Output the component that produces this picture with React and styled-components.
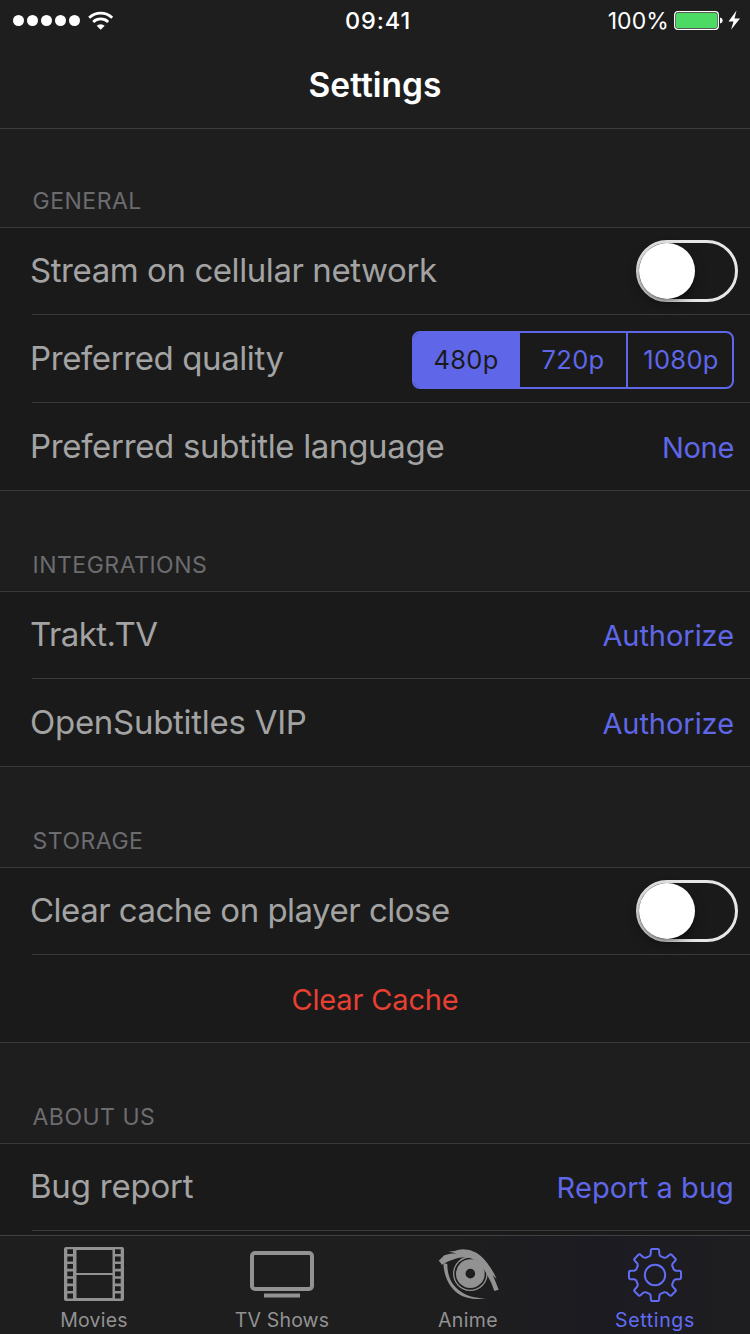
import React from "react";
import styled, { createGlobalStyle } from "styled-components";

const GlobalStyle = createGlobalStyle`
  * { box-sizing: border-box; }
  html, body { margin: 0; background: #1e1e1e; }
  body { font-family: Inter, "Liberation Sans", sans-serif; overflow: hidden; }
`;

const Screen = styled.main`
  width: 750px;
  height: 1334px;
  display: flex;
  flex-direction: column;
  overflow: hidden;
  background: #1e1e1e;
  color: #fff;
`;

const StatusBar = styled.div`
  height: 40px;
  flex: none;
  display: grid;
  grid-template-columns: 1fr auto 1fr;
  align-items: center;
  padding: 1px 9px 0 13px;
`;

const Signal = styled.div`
  display: flex;
  align-items: center;
  gap: 3px;
`;

const Dot = styled.i`
  width: 11px;
  height: 11px;
  border-radius: 50%;
  background: #fff;
`;

const WifiIcon = styled.svg`
  margin-left: 5px;
`;

const Clock = styled.div`
  font-size: 23.5px;
  font-weight: 550;
  line-height: 28px;
  letter-spacing: 0.9px;
  margin: 0 -2px 0 0;
`;

const Power = styled.div`
  display: flex;
  justify-content: flex-end;
  align-items: center;
`;

const Percent = styled.span`
  font-size: 23px;
  line-height: 28px;
  letter-spacing: 0.1px;
  margin-right: 5px;
`;

const NavBar = styled.header`
  height: 89px;
  flex: none;
  display: flex;
  justify-content: center;
  border-bottom: 1px solid #3d3d3d;
  padding-top: 22px;
`;

const Title = styled.h1`
  margin: 0;
  font-size: 33.5px;
  font-weight: 600;
  line-height: 46px;
`;

const Content = styled.div`
  flex: 1;
  min-height: 0;
  overflow: hidden;
`;

const SectionTitle = styled.h2`
  margin: 0;
  height: ${(p) => p.$height}px;
  display: flex;
  align-items: flex-end;
  padding: 0 0 11px 32.5px;
  font-size: 23px;
  font-weight: 400;
  line-height: 30px;
  letter-spacing: 0.5px;
  color: #6c6c70;
`;

const Group = styled.div`
  background: #1a1a1a;
  border-top: 1px solid #3a3a3a;
  border-bottom: 1px solid #3a3a3a;
`;

const Row = styled.div`
  height: 88px;
  margin-left: 32px;
  display: flex;
  align-items: center;
  justify-content: ${(p) => (p.$center ? "center" : "space-between")};
  padding-right: ${(p) => p.$inset ?? 16}px;
  border-bottom: 1px solid #3a3a3a;
  &:first-child { height: 87px; }
  &:last-child:not(:first-child) { height: 87px; border-bottom: 0; }
`;

const Label = styled.span`
  margin-left: -2px;
  padding-bottom: 2px;
  font-size: 33px;
  line-height: 40px;
  letter-spacing: ${(p) => p.$spacing ?? 0}px;
  color: #a3a3a3;
  white-space: nowrap;
`;

const Action = styled.button`
  border: 0;
  padding: 2px 0 0;
  background: none;
  font: 400 29px/36px Inter, "Liberation Sans", sans-serif;
  letter-spacing: ${(p) => p.$spacing ?? 0}px;
  color: ${(p) => (p.$danger ? "#e74033" : "#5f67e8")};
  white-space: nowrap;
`;

const Switch = styled.div`
  width: 102px;
  height: 62px;
  display: flex;
  align-items: center;
  border: 3px solid #e7e5e6;
  border-radius: 31px;
`;

const Knob = styled.div`
  width: 56px;
  height: 56px;
  border-radius: 50%;
  background: #fff;
  box-shadow: 0 5px 12px rgba(0, 0, 0, 0.35), 0 2px 3px rgba(0, 0, 0, 0.2);
`;

const Segmented = styled.div`
  width: 322px;
  height: 58px;
  display: grid;
  grid-template-columns: repeat(3, 106px);
  overflow: hidden;
  border: 2px solid #5f67e8;
  border-radius: 8px;
  margin-top: 2px;
`;

const Segment = styled.div`
  display: flex;
  align-items: center;
  justify-content: center;
  font-size: 25.5px;
  line-height: 30px;
  letter-spacing: 0.3px;
  background: ${(p) => (p.$selected ? "#5f67e8" : "transparent")};
  color: ${(p) => (p.$selected ? "#1a1a1a" : "#5f67e8")};
  box-shadow: ${(p) => (p.$selected ? "-2px 0 0 #5f67e8" : "none")};
  & + & + & { border-left: 2px solid #5f67e8; padding-left: 2px; }
  &:first-child { padding-right: 2px; }
`;

const TabBar = styled.nav`
  height: 99px;
  flex: none;
  display: grid;
  grid-template-columns: 188px 188px 184px 190px;
  border-top: 1px solid #414141;
  background: linear-gradient(90deg, #1e1e1e 0 60%, #1c1b22 80%, #1e1e20);
`;

const Tab = styled.div`
  display: flex;
  flex-direction: column;
  align-items: center;
  padding-top: 8px;
  color: ${(p) => (p.$active ? "#626df5" : "#929292")};
`;

const TabLabel = styled.span`
  font-size: 19.5px;
  line-height: 24px;
  margin-top: 4px;
  letter-spacing: ${(p) => p.$spacing ?? 0.1}px;
`;

const FilmIcon = () => {
  const holes = [0, 1, 2, 3, 4, 5, 6];
  return (
    <svg width="64" height="60" viewBox="0 0 64 60" fill="none">
      <path
        fill="currentColor"
        fillRule="evenodd"
        d={
          "M4 3h56a2 2 0 0 1 2 2v50a2 2 0 0 1-2 2H4a2 2 0 0 1-2-2V5a2 2 0 0 1 2-2ZM14.5 6H50.5V29H14.5ZM14.5 31H50.5V54H14.5Z" +
          holes.map((i) => `M5.3 ${5.2 + i * 7.4}h5.700v4.800h-5.700ZM53 ${5.2 + i * 7.4}h5.700v4.800h-5.700Z`).join("")
        }
      />
    </svg>
  );
};

const TvIcon = () => (
  <svg width="64" height="60" viewBox="0 0 64 60" fill="none">
    <rect x="2" y="9" width="60" height="36" rx="3" stroke="currentColor" strokeWidth="4" />
    <path d="M14 51.5h36" stroke="currentColor" strokeWidth="4" />
  </svg>
);

const EyeIcon = () => (
  <svg width="64" height="60" viewBox="4 6 192 180" fill="currentColor">
    <path d="M12 56L29 40Q45 34 66 34Q52 33 40 28Q58 29 72 23Q100 19 125 32Q150 48 168 78Q178 92 186 111Q180 106 174 100Q180 112 192 143L179 147Q172 124 158 100C146 78 132 58 106 48C80 41 50 54 21 68Q18 61 12 56Z" />
    <path d="M26 63C27 96 40 134 72 156C92 169 124 174 154 169C118 168 96 162 76 147C50 128 38 102 38 66Z" />
    <circle cx="107" cy="95" r="50" fill="none" stroke="currentColor" strokeWidth="4" />
    <path fillRule="evenodd" d="M107 52a43 43 0 1 0 0 86a43 43 0 0 0 0-86ZM107 80.500a14.500 14.500 0 1 1 0 29a14.500 14.500 0 0 1 0-29Z" />
  </svg>
);

const tooth = (angle) => {
  const rad = (deg) => ((angle + deg) * Math.PI) / 180;
  const at = (r, deg) => `${(32 + r * Math.cos(rad(deg))).toFixed(2)} ${(31 + r * Math.sin(rad(deg))).toFixed(2)}`;
  return `${at(19.6, -16)}L${at(21, -12)}L${at(25, -9.5)}Q${at(26.2, -9)} ${at(26.2, -6.5)}L${at(26.2, 6.5)}Q${at(26.2, 9)} ${at(25, 9.5)}L${at(21, 12)}L${at(19.6, 16)}`;
};

const GearIcon = () => (
  <svg width="64" height="60" viewBox="0 0 64 60" fill="none" stroke="currentColor" strokeWidth="2" strokeLinejoin="round">
    <path d={`M${[0, 45, 90, 135, 180, 225, 270, 315].map(tooth).join("L")}Z`} />
    <circle cx="32" cy="31" r="10.2" />
  </svg>
);

const Toggle = () => (
  <Switch role="switch" aria-checked="false">
    <Knob />
  </Switch>
);

export default function App() {
  return (
    <Screen>
      <GlobalStyle />
      <StatusBar>
        <Signal>
          {[1, 2, 3, 4, 5].map((n) => (
            <Dot key={n} />
          ))}
          <WifiIcon width="26" height="20" viewBox="0 0 26 20" fill="none" stroke="#fff" strokeWidth="2.8">
            <path d="M1.200 6.700A16.500 16.500 0 0 1 24.200 6.700" />
            <path d="M5.200 10.900A11 11 0 0 1 20.200 10.900" />
            <path d="M12.700 18.800L8.700 14.800A5.800 5.800 0 0 1 16.700 14.800Z" fill="#fff" stroke="none" />
          </WifiIcon>
        </Signal>
        <Clock>09:41</Clock>
        <Power>
          <Percent>100%</Percent>
          <svg width="67" height="22" viewBox="0 0 67 22" fill="#fff">
            <rect x="0.7" y="1.7" width="43.6" height="17.6" rx="3" fill="none" stroke="#fff" strokeWidth="1.3" />
            <rect x="2" y="3" width="41" height="15" rx="1.5" fill="#4cd964" />
            <path d="M46 7.500C49.500 8 49.500 13 46 13.500Z" />
            <path d="M62.500 0.500L54.500 11.500H59.500L57 19.800L66 8.500H60.500Z" />
          </svg>
        </Power>
      </StatusBar>
      <NavBar>
        <Title>Settings</Title>
      </NavBar>
      <Content>
        <SectionTitle $height={98}>GENERAL</SectionTitle>
        <Group>
          <Row $inset={12}>
            <Label $spacing={-0.43}>Stream on cellular network</Label>
            <Toggle />
          </Row>
          <Row>
            <Label $spacing={-0.4}>Preferred quality</Label>
            <Segmented>
              <Segment $selected>480p</Segment>
              <Segment>720p</Segment>
              <Segment>1080p</Segment>
            </Segmented>
          </Row>
          <Row>
            <Label $spacing={-0.33}>Preferred subtitle language</Label>
            <Action $spacing={-0.3}>None</Action>
          </Row>
        </Group>
        <SectionTitle $height={100}>INTEGRATIONS</SectionTitle>
        <Group>
          <Row>
            <Label $spacing={-0.55}>Trakt.TV</Label>
            <Action $spacing={-0.05}>Authorize</Action>
          </Row>
          <Row>
            <Label $spacing={-0.28}>OpenSubtitles VIP</Label>
            <Action $spacing={-0.05}>Authorize</Action>
          </Row>
        </Group>
        <SectionTitle $height={100}>STORAGE</SectionTitle>
        <Group>
          <Row $inset={12}>
            <Label $spacing={-0.51}>Clear cache on player close</Label>
            <Toggle />
          </Row>
          <Row $center $inset={32}>
            <Action $danger $spacing={-0.15}>Clear Cache</Action>
          </Row>
        </Group>
        <SectionTitle $height={100}>ABOUT US</SectionTitle>
        <Group>
          <Row>
            <Label $spacing={-0.22}>Bug report</Label>
            <Action $spacing={0.08}>Report a bug</Action>
          </Row>
          <Row />
        </Group>
      </Content>
      <TabBar>
        <Tab><FilmIcon /><TabLabel $spacing={0.2}>Movies</TabLabel></Tab>
        <Tab><TvIcon /><TabLabel $spacing={0.15}>TV Shows</TabLabel></Tab>
        <Tab><EyeIcon /><TabLabel $spacing={0.4}>Anime</TabLabel></Tab>
        <Tab $active><GearIcon /><TabLabel $spacing={0.65}>Settings</TabLabel></Tab>
      </TabBar>
    </Screen>
  );
}
